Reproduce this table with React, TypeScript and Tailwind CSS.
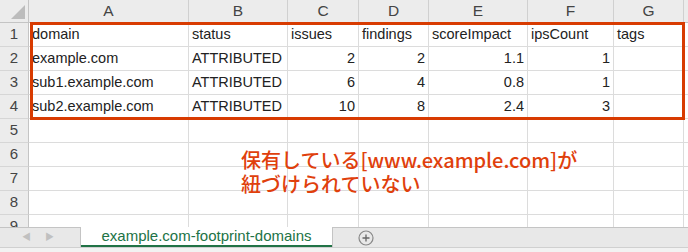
import React from 'react';

const cols = [
  { key: 'A', w: 'w-[160px]' },
  { key: 'B', w: 'w-[99px]' },
  { key: 'C', w: 'w-[71px]' },
  { key: 'D', w: 'w-[70px]' },
  { key: 'E', w: 'w-[99px]' },
  { key: 'F', w: 'w-[86px]' },
  { key: 'G', w: 'w-[70px]' },
];

type Cell = { v: string; num?: boolean };

const rows: Cell[][] = [
  [{ v: 'domain' }, { v: 'status' }, { v: 'issues' }, { v: 'findings' }, { v: 'scoreImpact' }, { v: 'ipsCount' }, { v: 'tags' }],
  [{ v: 'example.com' }, { v: 'ATTRIBUTED' }, { v: '2', num: true }, { v: '2', num: true }, { v: '1.1', num: true }, { v: '1', num: true }, { v: '' }],
  [{ v: 'sub1.example.com' }, { v: 'ATTRIBUTED' }, { v: '6', num: true }, { v: '4', num: true }, { v: '0.8', num: true }, { v: '1', num: true }, { v: '' }],
  [{ v: 'sub2.example.com' }, { v: 'ATTRIBUTED' }, { v: '10', num: true }, { v: '8', num: true }, { v: '2.4', num: true }, { v: '3', num: true }, { v: '' }],
  [], [], [], [], [],
];

function RowHead({ n, last }: { n: number; last?: boolean }) {
  return (
    <div className={`w-[29px] shrink-0 flex items-center justify-center bg-[#ececec] border-r border-[#c4c4c4] text-[#444] text-[15px] ${last ? 'items-start' : 'border-b border-b-[#d6d6d6]'}`}>
      {n}
    </div>
  );
}

export default function App() {
  return (
    <div className="w-[688px] h-[252px] bg-white overflow-hidden relative select-none" style={{ fontFamily: '"Liberation Sans", "Noto Sans CJK JP", sans-serif' }}>
      {/* sheet */}
      <div className="h-[227px] overflow-hidden">
        {/* column headers */}
        <div className="flex h-[23px] bg-[#ececec] border-b border-[#c4c4c4]">
          <div className="w-[29px] shrink-0 border-r border-[#c4c4c4] relative">
            <svg width="29" height="22" className="absolute inset-0">
              <polygon points="25,5 25,19 11,19" fill="#bcbcbc" />
            </svg>
          </div>
          {cols.map((c) => (
            <div key={c.key} className={`${c.w} shrink-0 flex items-center justify-center border-r border-[#d0d0d0] text-[#444] text-[15.5px]`}>
              {c.key}
            </div>
          ))}
          <div className="flex-1" />
        </div>

        {rows.map((r, i) => (
          <div key={i} className="flex h-[24px]">
            <RowHead n={i + 1} last={i === 8} />
            {cols.map((c, j) => {
              const cell = r[j];
              return (
                <div
                  key={c.key}
                  className={`${c.w} shrink-0 flex items-center px-[3px] border-r border-b border-[#dcdcdc] text-[#222] text-[14.5px] whitespace-nowrap overflow-hidden ${cell?.num ? 'justify-end' : ''}`}
                >
                  {cell?.v}
                </div>
              );
            })}
            <div className="flex-1 border-b border-[#dcdcdc] bg-white" />
          </div>
        ))}
      </div>

      {/* sheet tabs */}
      <div className="flex h-[20px] bg-[#e8e8e8]">
        <div className="w-[81px] shrink-0 border-t border-r border-[#c4c4c4] flex items-center pl-[22px] gap-[14px] text-[9px] text-[#c0c0c0]">
          <span>◀</span>
          <span>▶</span>
        </div>
        <div className="w-[251px] shrink-0 bg-white border-b-2 border-[#217346] flex items-center justify-center text-[15px] text-[#217346]">
          example.com-footprint-domains
        </div>
        <div className="flex-1 border-t border-l border-[#c4c4c4] flex items-center pl-[25px]">
          <svg width="16" height="16" viewBox="0 0 16 16">
            <circle cx="8" cy="8" r="7" fill="none" stroke="#888" strokeWidth="1.2" />
            <path d="M8 4.5v7M4.5 8h7" stroke="#666" strokeWidth="1.3" />
          </svg>
        </div>
      </div>
      <div className="h-[5px] bg-[#f2f2f2] border-t border-[#d0d0d0]" />

      {/* highlight frame */}
      <div className="absolute left-[30px] top-[22px] w-[655px] h-[98px] border-[3px] border-[#d83b01]" />

      {/* callout */}
      <div
        className="absolute left-[241px] top-[148px] text-[20px] leading-[24px] font-medium text-[#e0400c]"
        style={{ fontFamily: '"Noto Sans CJK JP", sans-serif' }}
      >
        保有している[www.example.com]が
        <br />
        紐づけられていない
      </div>
    </div>
  );
}
